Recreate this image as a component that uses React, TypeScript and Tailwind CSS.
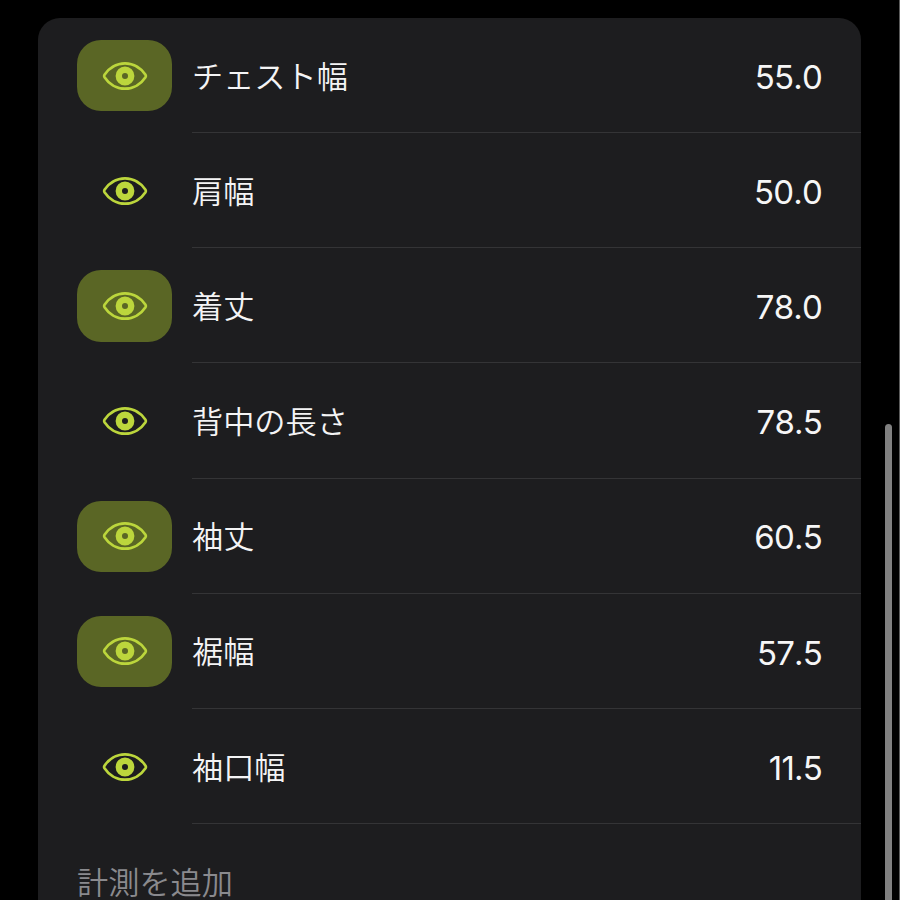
type Measurement = {
  label: string;
  value: string;
  active: boolean;
};

const measurements: Measurement[] = [
  { label: 'チェスト幅', value: '55.0', active: true },
  { label: '肩幅', value: '50.0', active: false },
  { label: '着丈', value: '78.0', active: true },
  { label: '背中の長さ', value: '78.5', active: false },
  { label: '袖丈', value: '60.5', active: true },
  { label: '裾幅', value: '57.5', active: true },
  { label: '袖口幅', value: '11.5', active: false },
];

const EyeIcon = () => (
  <svg width="46" height="30" viewBox="0 0 46 30" fill="none" className="text-[#bcd63c]">
    <path
      d="M2.5 13.7C6.5 7.6 14 2.3 23 2.3S39.5 7.6 43.5 13.7Q44.3 15 43.5 16.3C39.5 22.4 32 27.7 23 27.7S6.5 22.4 2.5 16.3Q1.7 15 2.5 13.7Z"
      stroke="currentColor"
      strokeWidth="2.7"
      strokeLinejoin="round"
    />
    <circle cx="23" cy="15" r="6.2" stroke="currentColor" strokeWidth="6.4" />
  </svg>
);

const MeasurementRow = ({ label, value, active }: Measurement) => (
  <li className="flex h-[115.17px] pl-[39px]">
    <button
      className={`mt-[21.9px] flex h-[71.6px] w-[95.4px] shrink-0 items-center justify-center rounded-[24px] ${
        active ? 'bg-[#5a6625]' : ''
      }`}
    >
      <EyeIcon />
    </button>
    <div className="ml-[19.6px] flex flex-1 items-center justify-between border-b border-[#343436] pr-[39px]">
      <span className="text-[31.2px] font-[350] text-[#f4f4f5]">{label}</span>
      <span className="pt-[5px] font-['Inter'] text-[33px] tracking-[-0.8px] text-[#f6f6f6] [font-kerning:none]">
        {value}
      </span>
    </div>
  </li>
);

export default function App() {
  return (
    <div className="flex h-[900px] w-[900px] overflow-hidden border-r border-[#5c5c5c] bg-black pl-[38px] font-['Noto_Sans_CJK_JP',sans-serif]">
      <section className="mt-[18px] w-[823px] shrink-0 rounded-t-[22px] bg-[#1d1d1f]">
        <ul>
          {measurements.map((item) => (
            <MeasurementRow key={item.label} {...item} />
          ))}
        </ul>
        <p className="pt-[39px] pl-[39px] text-[31.2px] leading-[35px] font-[350] text-[#8a8a8e]">計測を追加</p>
      </section>

      {/* Scroll indicator */}
      <div className="mt-[424px] ml-6 w-[7px] shrink-0 rounded-t-full bg-[#808080]" />
    </div>
  );
}
